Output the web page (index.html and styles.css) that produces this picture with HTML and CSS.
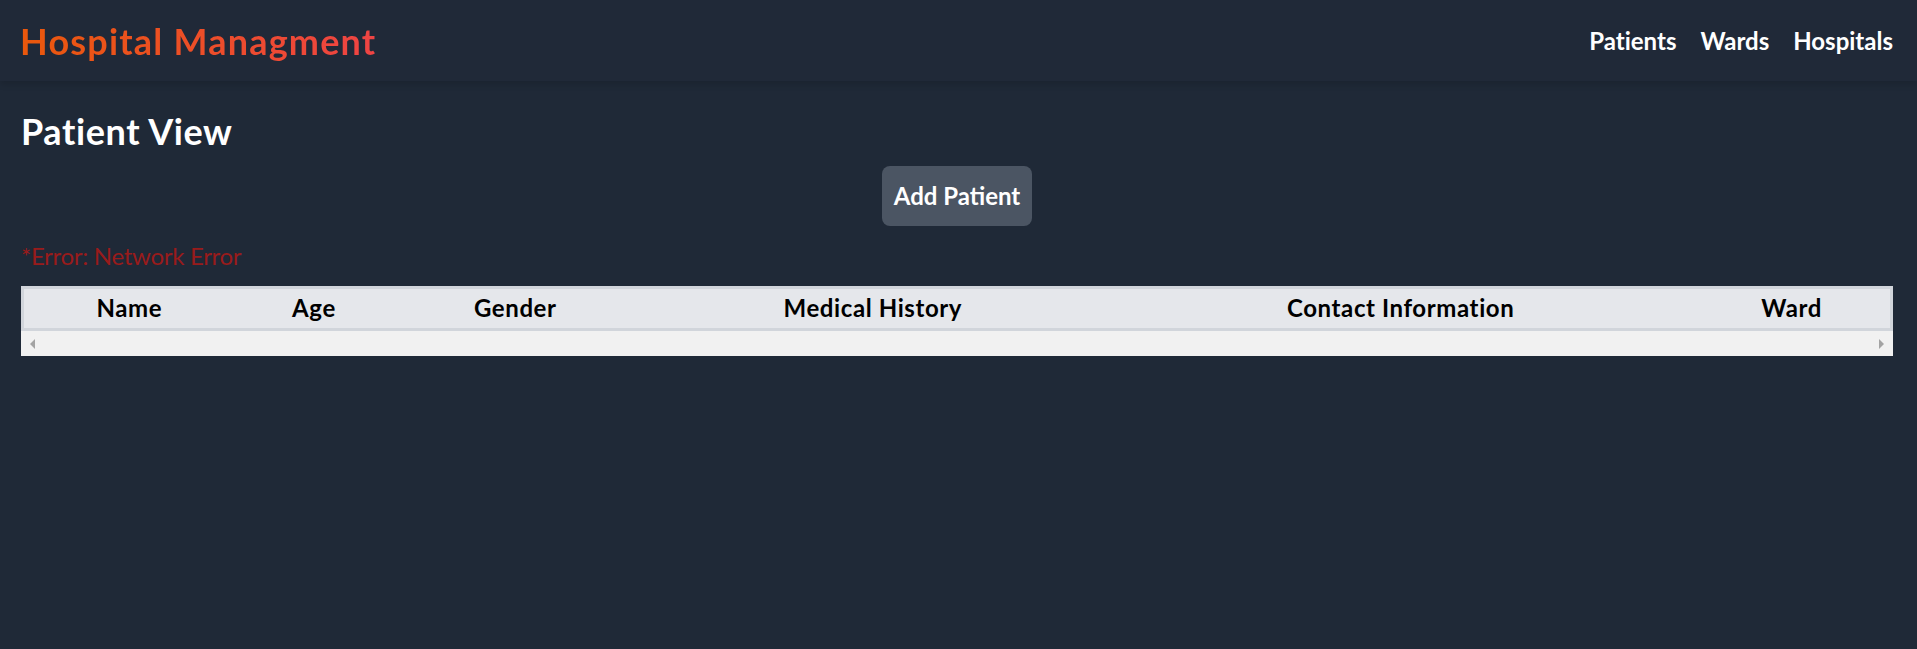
FILE: index.html
```html
<!DOCTYPE html>
<html lang="en">
<head>
<meta charset="utf-8">
<title>Hospital Managment</title>
<link rel="stylesheet" href="styles.css">
</head>
<body>
<nav class="navbar">
  <div class="brand">Hospital Managment</div>
  <div class="nav-links">
    <a class="nav-link" href="#">Patients</a>
    <a class="nav-link" href="#">Wards</a>
    <a class="nav-link" href="#">Hospitals</a>
  </div>
</nav>
<main class="content">
  <h1 class="page-title">Patient View</h1>
  <div class="actions">
    <button class="btn-add" type="button">Add Patient</button>
  </div>
  <p class="error">*Error: Network Error</p>
  <div class="table-wrap">
    <table class="patients">
      <thead>
        <tr>
          <th class="col-name">Name</th>
          <th class="col-age">Age</th>
          <th class="col-gender">Gender</th>
          <th class="col-history">Medical History</th>
          <th class="col-contact">Contact Information</th>
          <th class="col-ward">Ward</th>
        </tr>
      </thead>
      <tbody></tbody>
    </table>
    <div class="scrollbar">
      <span class="arrow arrow-left"></span>
      <span class="arrow arrow-right"></span>
    </div>
  </div>
</main>
</body>
</html>
```
FILE: styles.css
```css
* { box-sizing: border-box; }
html, body { margin: 0; padding: 0; }
body {
  background: #1f2937;
  font-family: Lato, "Open Sans", sans-serif;
  font-variant-ligatures: none;
  color: #ffffff;
  min-height: 649px;
}
.navbar {
  display: flex;
  align-items: center;
  justify-content: space-between;
  height: 81px;
  padding: 0 24px 0 20px;
  background: #202938;
  box-shadow: 0 4px 6px rgba(0, 0, 0, 0.12);
}
.brand {
  font-size: 36px;
  line-height: 40px;
  font-weight: 700;
  letter-spacing: 1.2px;
  background: linear-gradient(90deg, #ea580c, #ef4444);
  -webkit-background-clip: text;
  background-clip: text;
  color: transparent;
}
.nav-links {
  display: flex;
  gap: 24px;
}
.nav-link {
  color: #ffffff;
  text-decoration: none;
  font-size: 24px;
  line-height: 32px;
  font-weight: 700;
}
.content {
  padding: 0 24px 0 21px;
}
.page-title {
  margin: 0;
  padding-top: 30px;
  font-size: 36px;
  line-height: 40px;
  font-weight: 700;
  letter-spacing: 0.6px;
}
.actions {
  display: flex;
  justify-content: center;
  margin-top: 15px;
}
.btn-add {
  font-family: inherit;
  font-size: 24px;
  line-height: 36px;
  font-weight: 700;
  color: #ffffff;
  background: #4b5563;
  border: 0;
  border-radius: 8px;
  padding: 12px 12px;
  cursor: pointer;
}
.error {
  margin: 14px 0 0;
  font-size: 24px;
  line-height: 32px;
  letter-spacing: -0.3px;
  color: #991b1b;
}
.table-wrap {
  margin-top: 14px;
  background: #f1f1f1;
}
.patients {
  width: 100%;
  border-collapse: collapse;
  table-layout: fixed;
  border: 3px solid #d1d5db;
  background: #e5e7eb;
}
.patients th {
  color: #000000;
  font-size: 24px;
  line-height: 32px;
  font-weight: 700;
  letter-spacing: 0.6px;
  text-align: center;
  padding: 3px 0 4px;
  white-space: nowrap;
}
.col-name { width: 212px; }
.col-age { width: 158px; }
.col-gender { width: 244px; }
.col-history { width: 470px; }
.col-contact { width: 584px; }
.col-ward { width: 198px; }
.scrollbar {
  display: flex;
  align-items: center;
  justify-content: space-between;
  height: 25px;
  padding: 0 9px;
  background: #f1f1f1;
}
.arrow {
  width: 0;
  height: 0;
  border-top: 5px solid transparent;
  border-bottom: 5px solid transparent;
}
.arrow-left { border-right: 5px solid #a3a3a3; }
.arrow-right { border-left: 5px solid #a3a3a3; }
```
